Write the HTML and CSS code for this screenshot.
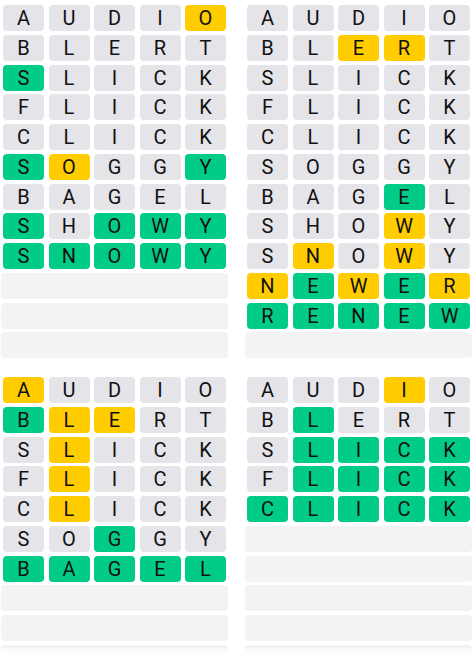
FILE: index.html
```html
<!DOCTYPE html>
<html>
<head>
    <meta charset="utf-8"/>
    <title>Quordle</title>
    <link rel="stylesheet" href="styles.css">
</head>
<body>
    <div class="boards" id="boards"></div>
    <div class="bottom-fade"></div>

    <script>
        // 각 보드의 추측 단어와 색상 (g = 초록, y = 노랑, . = 회색)
        const boards = [
            [
                ['AUDIO', '....y'], ['BLERT', '.....'], ['SLICK', 'g....'],
                ['FLICK', '.....'], ['CLICK', '.....'], ['SOGGY', 'gy..g'],
                ['BAGEL', '.....'], ['SHOWY', 'g.ggg'], ['SNOWY', 'ggggg']
            ],
            [
                ['AUDIO', '.....'], ['BLERT', '..yy.'], ['SLICK', '.....'],
                ['FLICK', '.....'], ['CLICK', '.....'], ['SOGGY', '.....'],
                ['BAGEL', '...g.'], ['SHOWY', '...y.'], ['SNOWY', '.y.y.'],
                ['NEWER', 'ygygy'], ['RENEW', 'ggggg']
            ],
            [
                ['AUDIO', 'y....'], ['BLERT', 'gyy..'], ['SLICK', '.y...'],
                ['FLICK', '.y...'], ['CLICK', '.y...'], ['SOGGY', '..g..'],
                ['BAGEL', 'ggggg']
            ],
            [
                ['AUDIO', '...y.'], ['BLERT', '.g...'], ['SLICK', '.gggg'],
                ['FLICK', '.gggg'], ['CLICK', 'ggggg']
            ]
        ];

        const container = document.getElementById('boards');

        boards.forEach(function(rows) {
            const board = document.createElement('div');
            board.className = 'board';

            for (let i = 0; i < 12; i++) {
                const row = document.createElement('div');
                if (rows[i]) {
                    row.className = 'row';
                    const word = rows[i][0];
                    const marks = rows[i][1];
                    for (let j = 0; j < 5; j++) {
                        const tile = document.createElement('div');
                        tile.className = 'tile';
                        if (marks[j] === 'g') tile.classList.add('green');
                        if (marks[j] === 'y') tile.classList.add('yellow');
                        tile.textContent = word[j];
                        row.appendChild(tile);
                    }
                } else {
                    row.className = 'row empty';
                }
                board.appendChild(row);
            }
            container.appendChild(board);
        });
    </script>
</body>
</html>
```

FILE: styles.css
```css
body {
    margin: 0;
    background-color: #fff;
    font-family: Roboto, "Liberation Sans", sans-serif;
    overflow: hidden;
}

/* 보드 배치 */
.boards {
    display: grid;
    grid-template-columns: 227px 227px;
    column-gap: 17px;
    row-gap: 18.75px;
    padding: 5px 0 0 1px;
}
.board {
    display: flex;
    flex-direction: column;
    gap: 3.75px;
}

/* 줄과 타일 */
.row {
    display: grid;
    grid-template-columns: repeat(5, 1fr);
    column-gap: 4.5px;
    height: 26px;
    padding: 0 2px;
}
.row.empty {
    padding: 0;
    background-color: #f3f3f5;
    border-radius: 4px;
}
.tile {
    display: flex;
    align-items: center;
    justify-content: center;
    background-color: #e4e4e9;
    border-radius: 4px;
    color: #111;
    font-size: 20px;
    line-height: 1;
}
.tile.green {
    background-color: #00cc88;
}
.tile.yellow {
    background-color: #ffcc00;
}

/* 아래쪽 흐림 */
.bottom-fade {
    position: fixed;
    left: 0;
    right: 0;
    bottom: 0;
    height: 7px;
    background: linear-gradient(to bottom, rgba(255,255,255,0.5), #fff);
}
```
